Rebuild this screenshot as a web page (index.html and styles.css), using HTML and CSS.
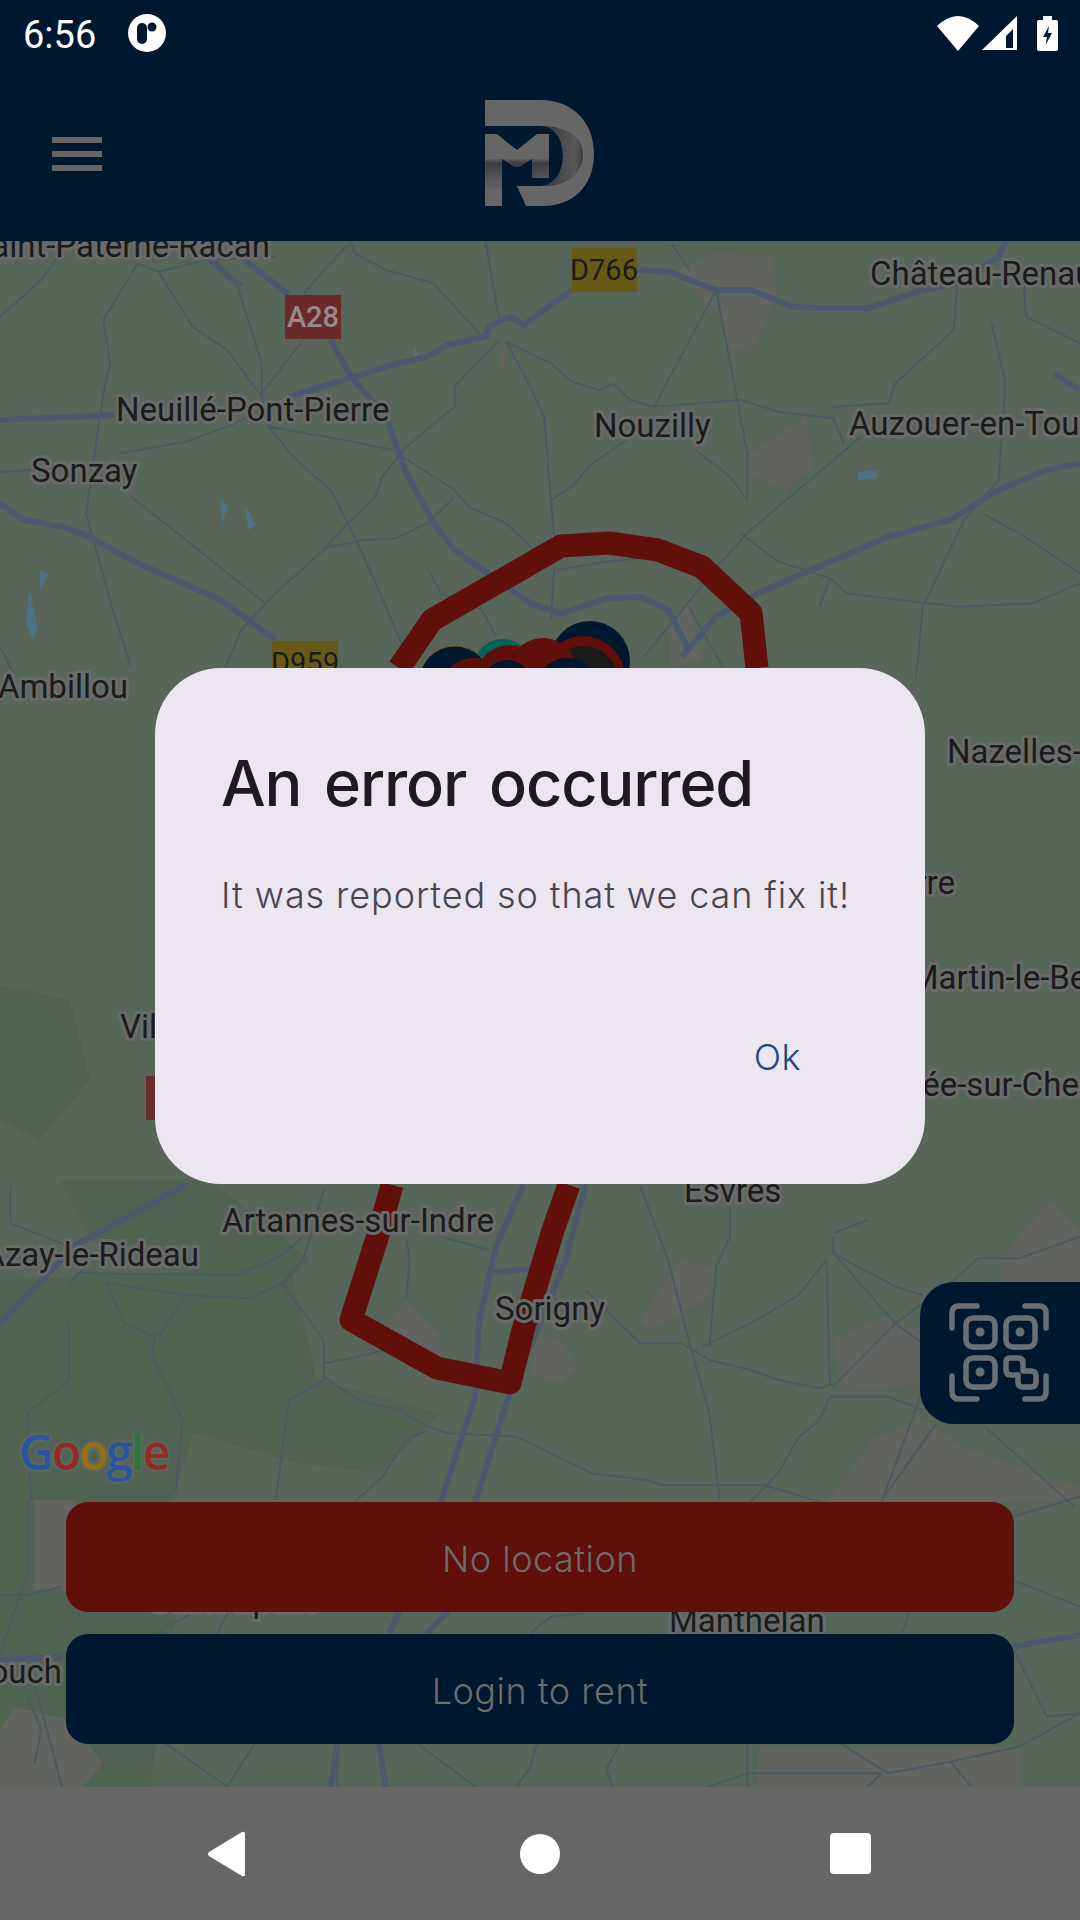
FILE: index.html
```html
<!DOCTYPE html>
<html lang="en">
<head>
<meta charset="utf-8">
<title>An error occurred</title>
<link rel="stylesheet" href="styles.css">
</head>
<body>
<div class="screen">
  <header class="appbar">
    <div class="statusbar">
      <div class="status-left">
        <span class="clock">6:56</span>
        <svg class="app-dot" viewBox="0 0 38 38"><circle cx="19" cy="19" r="19" fill="#fff"/><rect x="9" y="9" width="10" height="21" rx="5" fill="#001730"/><circle cx="24" cy="13" r="4.5" fill="#001730"/></svg>
      </div>
      <div class="status-right">
        <svg class="st-wifi" viewBox="0 0 42 35"><path d="M0 10Q21-10 42 10L21 35Z" fill="#fff"/></svg>
        <svg class="st-signal" viewBox="0 0 35 35"><path d="M0 34L35 0V34ZM24 32H31V13L24 20Z" fill="#fff" fill-rule="evenodd"/></svg>
        <svg class="st-batt" viewBox="0 0 21 35"><path d="M6 0H15V4H19Q21 4 21 6V33Q21 35 19 35H2Q0 35 0 33V6Q0 4 2 4H6Z" fill="#fff"/><path d="M12 10L6 21H10L8.5 29L15 17H11Z" fill="#001730"/></svg>
      </div>
    </div>
    <div class="toolbar">
      <div class="burger"><i></i><i></i><i></i></div>
      <svg class="logo" viewBox="485 101 110 107">
        <defs>
          <linearGradient id="mShade" x1="0" y1="0" x2="0" y2="1"><stop offset="0" stop-color="#666"/><stop offset=".34" stop-color="#666"/><stop offset=".40" stop-color="#3a3e43"/><stop offset=".78" stop-color="#666"/><stop offset="1" stop-color="#666"/></linearGradient>
          <linearGradient id="dShade" x1="0" y1="0" x2="1" y2="0"><stop offset="0" stop-color="#2a2e33"/><stop offset=".8" stop-color="#5a5a5a"/><stop offset="1" stop-color="#3a3d41"/></linearGradient>
        </defs>
        <path d="M485 101H540C574 101 594 124 594 155C594 186 574 207 543 207H526L517 187H540C555 187 563 172 563 157C563 140 555 127 540 127H485Z" fill="#666"/>
        <path d="M540 127C555 127 563 140 563 157C563 172 555 187 540 187H548C570 186 583 172 583 155C583 140 570 127 540 127Z" fill="url(#dShade)"/>
        <path d="M485 135H497L517 151L537 135H549V179H532V160L521 167Q517 169 513 167L502 160V207H485Z" fill="url(#mShade)"/>
      </svg>
    </div>
  </header>

  <main class="stage">
    <svg class="map" viewBox="0 241 1080 1546" preserveAspectRatio="none">
      <rect x="0" y="241" width="1080" height="1546" fill="#586659"/>

      <g fill="#506353">
        <path d="M0 1280L290 1267L317 1380L441 1413L379 1473L296 1463L193 1433L172 1502H172L120 1560L180 1590L150 1790H0Z"/>
        <path d="M60 1180H210L310 1260L280 1290L150 1260L90 1240Z"/>
        <path d="M0 985L70 1000L90 1080L40 1140L0 1120Z"/>
      </g>
      <g fill="#62645f">
        <path d="M675 273L716 253L771 257L778 290L751 353L723 347L723 317Z"/>
        <path d="M751 453L806 417L813 467L785 490L751 473Z"/>
        <path d="M495 345L505 345L506 380Z"/>
        <path d="M670 620L690 600L702 660L670 668Z"/>
        <path d="M406 1300L441 1337L441 1363L386 1353L379 1343Z"/>
        <path d="M680 1260L716 1267L709 1297L650 1330L640 1320Z"/>
        <path d="M834 1340L888 1313L923 1337L923 1383L841 1393Z"/>
        <path d="M875 1437L923 1420L964 1447L1033 1473L1080 1487V1502H827Z"/>
        <path d="M34 1500H76V1590H34Z"/>
        <path d="M14 1707L69 1720L103 1763L83 1787H0V1730Z"/>
        <path d="M758 1747H1019V1787H758Z"/>
        <path d="M535 1330L560 1340L578 1365L560 1383L530 1375Z"/>
        <path d="M1000 1260L1050 1200L1080 1230V1290H1000Z"/>
      </g>

      <g fill="#4f7282">
        <path d="M858 472L878 470L878 478L858 480Z"/>
        <path d="M30 590L38 630L32 640L26 620Z"/>
        <path d="M220 500L228 505L222 525Z"/>
        <path d="M414 345L418 355L414 358Z"/>
        <path d="M245 505L256 525L248 530Z"/>
        <path d="M40 570L48 575L40 590Z"/>
      </g>

      <g class="thin" transform="translate(0,240) scale(.6887,.3333)">
        <path d="M510 5L515 40L560 90L630 130L660 200L700 290"/>
        <path d="M510 5L470 90L440 165"/>
        <path d="M230 95L280 260L330 330L380 470"/>
        <path d="M200 70L230 95L300 60L400 50"/>
        <path d="M100 5L60 120L0 230"/>
        <path d="M200 70L150 240L160 370L150 460L125 820L165 1120L190 1280"/>
        <path d="M705 5L725 240"/>
        <path d="M345 140L380 370L380 470L390 560L430 660L480 750L510 870L550 1050L585 1220"/>
        <path d="M440 300L380 460"/>
        <path d="M725 300L660 440L660 500L590 620L555 710L545 770L500 860L470 930L400 1060L350 1170L320 1320"/>
        <path d="M735 305L770 440L790 530L800 780L805 900"/>
        <path d="M890 430L870 450L830 425L800 370L735 305"/>
        <path d="M890 430L915 480L950 500L1040 150"/>
        <path d="M1040 150L1085 640L1085 780"/>
        <path d="M975 10L1000 90"/>
        <path d="M950 500L1075 480L1130 515L1210 535L1225 610"/>
        <path d="M1290 490L1210 500"/>
        <path d="M1390 130L1385 270L1300 430L1290 490"/>
        <path d="M1250 590L1085 880L1050 960L935 1250"/>
        <path d="M1485 100L1490 230L1568 310"/>
        <path d="M1440 250L1460 430L1450 720L1400 840L1340 1100L1330 1320"/>
        <path d="M1430 825L1480 880L1568 1000"/>
        <path d="M1075 880L1130 965L1205 1015L1230 1060L1330 1085L1390 1100L1500 1090L1568 1030"/>
        <path d="M1205 1015L1190 1100"/>
        <path d="M910 600L860 670L830 740L800 780"/>
        <path d="M1010 630L1060 710L1085 780"/>
        <path d="M660 750L680 800L735 850L775 930"/>
        <path d="M660 770L620 850L575 895L530 900L470 925"/>
        <path d="M175 640L270 605L330 560L385 510"/>
        <path d="M390 560L500 600L570 630L660 750"/>
        <path d="M0 695L45 690"/>
        <path d="M190 770L270 900L385 1090"/>
        <path d="M620 980L640 1060L700 1110L720 1190"/>
        <path d="M805 980L800 1140"/>
        <path d="M810 990L880 965L950 950"/>
        <path d="M0 1220L20 1300"/>
        <path d="M1000 1100L1060 1320"/>
      </g>

      <g class="thin" transform="translate(0,1180) scale(.6887,.3333)">
        <path d="M15 15L15 130L90 190L130 250L100 310"/>
        <path d="M155 310L180 430L225 470L220 520L265 720L255 940"/>
        <path d="M270 345L230 470"/>
        <path d="M100 430L100 600L40 700L45 960"/>
        <path d="M155 310L270 345L360 355L410 310L440 240L470 30"/>
        <path d="M110 280L345 285L410 225L440 170"/>
        <path d="M410 310L470 480L470 600L420 660L400 960"/>
        <path d="M470 550L520 530L560 510L640 540"/>
        <path d="M470 590L520 660L580 690L620 740L650 760L750 770L860 880L940 900L960 915L1110 915L1190 965"/>
        <path d="M620 750L590 780L555 890L515 965"/>
        <path d="M590 180L595 240L590 350"/>
        <path d="M850 330L930 490L990 490L1030 540L1090 570L1130 600L1190 625L1210 610"/>
        <path d="M1210 170L1210 220L1300 430L1360 520L1280 965"/>
        <path d="M930 20L970 240L1000 480L1030 700L1045 960"/>
        <path d="M1210 220L1300 320L1340 345"/>
        <path d="M1060 80L1060 170L1040 260L1030 500"/>
        <path d="M1020 500L1090 430L1160 345L1200 240L1205 610"/>
        <path d="M1205 650L1290 650L1340 690"/>
        <path d="M1205 650L1190 720L1160 770L1130 880L1090 965"/>
        <path d="M1420 235L1480 235L1568 170"/>
        <path d="M1420 235L1380 310L1300 430L1210 620"/>
        <path d="M1360 730L1280 960"/>
        <path d="M1430 740L1560 980"/>
        <path d="M640 170L710 210"/>
        <path d="M1210 160L1260 120"/>
      </g>

      <g class="thin" transform="translate(0,1480) scale(.6887,.3333)">
        <path d="M40 60L40 280L0 520"/>
        <path d="M0 345L40 345L90 320"/>
        <path d="M40 530L90 920"/>
        <path d="M280 400L240 440L230 470"/>
        <path d="M330 400L290 570"/>
        <path d="M370 790L330 920L240 790"/>
        <path d="M490 790L490 920"/>
        <path d="M605 790L690 920"/>
        <path d="M780 790L770 860L750 920"/>
        <path d="M900 790L880 870L890 920"/>
        <path d="M1085 790L1085 920"/>
        <path d="M1220 790L1290 880L1380 845L1410 920"/>
        <path d="M1085 880L1280 880L1260 920"/>
        <path d="M1085 880L1030 920"/>
        <path d="M1380 845L1480 800L1568 700"/>
        <path d="M1470 300L1568 380"/>
        <path d="M1470 110L1568 50"/>
        <path d="M1470 500L1520 710L1568 700"/>
        <path d="M850 400L800 410L770 460"/>
        <path d="M1320 400L1310 460"/>
        <path d="M40 650L60 750L50 850"/>
      </g>

      <g class="major" transform="translate(0,240) scale(.6887,.3333)">
        <path d="M305 60L350 140"/>
        <path d="M355 60L420 165M480 300L510 410L560 530L590 700L630 850L660 930L770 1090L815 1120L880 1075L930 1070L970 1110L1000 1230"/>
        <path d="M0 540L165 525M420 470L500 420L570 375L620 350L650 315L705 290L710 260L740 230L760 255L830 150M925 90L970 95L1040 150L1090 150L1150 200L1200 205L1260 205L1340 150L1390 130L1450 50L1460 5"/>
        <path d="M1568 670L1520 690L1450 750L1380 840L1290 890L1200 970L1100 1060L1040 1130L990 1250"/>
        <path d="M0 790L35 840L90 860L130 890L190 960L320 1080L400 1200"/>
        <path d="M1568 450L1530 400"/>
      </g>
      <g class="major" transform="translate(0,1180) scale(.6887,.3333)">
        <path d="M270 15L110 195L0 430"/>
        <path d="M760 15L720 200L695 430L690 650L640 965"/>
        <path d="M850 15L820 250L780 450L740 640L690 965"/>
        <path d="M710 280L750 270L810 260"/>
      </g>
      <g class="major" transform="translate(0,1480) scale(.6887,.3333)">
        <path d="M640 66L580 395L565 460"/>
        <path d="M695 66L650 395L620 460"/>
        <path d="M490 790L480 920"/>
        <path d="M550 790L560 920"/>
        <path d="M0 540L90 530"/>
        <path d="M1470 500L1568 465"/>
      </g>

      <path class="geofence" d="M399 668L432 620L561 546L609 543L658 550L702 567L751 613L757 668"/>
      <path class="geofence" d="M392 1185L378 1235L351 1320L437 1368L510 1383L523 1330L553 1230L569 1185"/>

      <circle cx="590" cy="661" r="40" fill="#001730"/>
      <circle cx="503" cy="669" r="30" fill="#006357"/>
      <circle cx="455" cy="682" r="36" fill="#001730" stroke="#6d5a16"/>
      <circle cx="583" cy="678" r="42" fill="#600f0a"/>
      <circle cx="583" cy="681" r="35" fill="#1a1a1a"/>
      <circle cx="543" cy="672" r="34" fill="#600f0a"/>
      <circle cx="510" cy="680" r="35" fill="#600f0a"/>
      <circle cx="473" cy="690" r="32" fill="#600f0a"/>
      <circle cx="507" cy="685" r="25" fill="#001730"/>
      <circle cx="567" cy="690" r="32" fill="#001730"/>
      <circle cx="570" cy="700" r="33" fill="#600f0a"/>

      <g class="shield">
        <rect x="572" y="248" width="65" height="44" fill="#685a16"/>
        <text x="604" y="280" class="sh-dark">D766</text>
        <rect x="285" y="295" width="56" height="44" fill="#6b2a2a"/>
        <text x="313" y="327" class="sh-light">A28</text>
        <rect x="272" y="641" width="66" height="44" fill="#685a16"/>
        <text x="305" y="673" class="sh-dark">D959</text>
        <rect x="146" y="1076" width="60" height="44" fill="#6b2a2a"/>
      </g>

      <g class="labels">
        <text x="270" y="257" text-anchor="end">Saint-Paterne-Racan</text>
        <text x="870" y="285">Château-Renault</text>
        <text x="116" y="421">Neuillé-Pont-Pierre</text>
        <text x="594" y="437">Nouzilly</text>
        <text x="849" y="435">Auzouer-en-Touraine</text>
        <text x="31" y="482">Sonzay</text>
        <text x="128" y="698" text-anchor="end">Ambillou</text>
        <text x="947" y="763">Nazelles-Négron</text>
        <text x="955" y="894" text-anchor="end">Dierre</text>
        <text x="826" y="989">Saint-Martin-le-Beau</text>
        <text x="120" y="1038">Villandry</text>
        <text x="872" y="1096">Athée-sur-Cher</text>
        <text x="684" y="1202">Esvres</text>
        <text x="222" y="1232">Artannes-sur-Indre</text>
        <text x="199" y="1266" text-anchor="end">Azay-le-Rideau</text>
        <text x="495" y="1320">Sorigny</text>
        <text x="150" y="1612">Saint-Épain</text>
        <text x="669" y="1632">Manthelan</text>
        <text x="62" y="1683" text-anchor="end">Crouch</text>
      </g>

      <text class="google" x="19" y="1470"><tspan fill="#2a55a0">G</tspan><tspan fill="#952a22">o</tspan><tspan fill="#967010">o</tspan><tspan fill="#2a55a0">g</tspan><tspan fill="#2a7539">l</tspan><tspan fill="#952a22">e</tspan></text>
    </svg>

    <button class="qr-btn" type="button" aria-label="Scan QR code">
      <svg class="qr-icon" viewBox="948 1303 102 102">
        <g fill="none" stroke="#6a6f76" stroke-width="5.5" stroke-linecap="round">
          <path d="M952 1329V1314Q952 1307 959 1307H977"/>
          <path d="M1025 1307H1039Q1046 1307 1046 1314V1329"/>
          <path d="M952 1377V1393Q952 1400 959 1400H977"/>
          <path d="M1025 1400H1039Q1046 1400 1046 1393V1377"/>
          <rect x="966" y="1319" width="29" height="29" rx="7"/>
          <rect x="1006" y="1319" width="29" height="29" rx="7"/>
          <rect x="966" y="1359" width="29" height="29" rx="7"/>
          <path d="M1006 1363Q1006 1359 1010 1359H1018Q1023 1359 1023 1364V1372H1031Q1036 1372 1036 1377V1383Q1036 1388 1031 1388H1023Q1018 1388 1018 1383V1376H1011Q1006 1376 1006 1371Z" stroke-linejoin="round"/>
        </g>
        <g fill="#6a6f76">
          <circle cx="980" cy="1333" r="4.5"/>
          <circle cx="1020" cy="1333" r="4.5"/>
          <circle cx="980" cy="1373" r="4.5"/>
        </g>
      </svg>
    </button>

    <div class="actions">
      <button class="action action-red" type="button">No location</button>
      <button class="action action-navy" type="button">Login to rent</button>
    </div>
  </main>

  <nav class="navbar">
    <svg class="nav-back" viewBox="0 0 38 46"><path d="M35 1Q38 0 38 3V43Q38 46 35 45L2 25Q0 23 2 21Z" fill="#fff"/></svg>
    <span class="nav-home"></span>
    <span class="nav-recent"></span>
  </nav>

  <section class="dialog" role="alertdialog">
    <h1 class="dialog-title">An error occurred</h1>
    <p class="dialog-body">It was reported so that we can fix it!</p>
    <div class="dialog-actions"><button class="dialog-ok" type="button">Ok</button></div>
  </section>
</div>
</body>
</html>
```
FILE: styles.css
```css
* { box-sizing: border-box; }
html, body { margin: 0; padding: 0; }
body { background: #001730; font-family: Roboto, "Noto Sans", sans-serif; }

.screen { position: relative; width: 1080px; height: 1920px; display: flex; flex-direction: column; overflow: hidden; }

.appbar { height: 241px; background: #001730; display: flex; flex-direction: column; flex: none; }
.statusbar { height: 66px; display: flex; justify-content: space-between; align-items: center; padding: 0 22px 0 23px; }
.status-left { display: flex; align-items: center; gap: 32px; }
.clock { color: #fff; font-size: 38px; line-height: 66px; padding-top: 3px; }
.app-dot { width: 38px; height: 38px; display: block; }
.status-right { display: flex; align-items: center; gap: 3px; }
.st-wifi { width: 42px; height: 35px; display: block; }
.st-signal { width: 35px; height: 35px; display: block; margin-right: 17px; }
.st-batt { width: 21px; height: 35px; display: block; }

.toolbar { flex: 1; display: flex; align-items: center; padding-left: 52px; }
.burger { display: flex; flex-direction: column; gap: 8px; width: 50px; }
.burger i { display: block; height: 6px; background: #666; }
.logo { width: 110px; height: 107px; display: block; margin-left: 383px; }

.stage { position: relative; flex: 1; display: flex; flex-direction: column; justify-content: flex-end; overflow: hidden; }
.map { position: absolute; left: 0; top: 0; width: 1080px; height: 1546px; display: block; }

.thin path { fill: none; stroke: #4a5963; stroke-width: 2; vector-effect: non-scaling-stroke; stroke-linejoin: round; }
.major path { fill: none; stroke: #4c586b; stroke-width: 6; vector-effect: non-scaling-stroke; stroke-linejoin: round; }

.geofence { fill: none; stroke: #600f0a; stroke-width: 23; stroke-linejoin: round; }

.shield text { font-family: Roboto, sans-serif; font-size: 29px; text-anchor: middle; }
.sh-dark { fill: #1a1a1a; }
.sh-light { fill: #968a8a; font-weight: 500; }

.labels text { font-family: Roboto, sans-serif; font-size: 33px; fill: #1b1b1b; stroke: #686b69; stroke-width: 6px; paint-order: stroke; stroke-linejoin: round; }
.google { font-family: "Open Sans", sans-serif; font-size: 48px; font-weight: 600; letter-spacing: -2px; filter: drop-shadow(0 0 2px #6e736f); }

.qr-btn { position: absolute; right: 0; top: 1041px; width: 160px; height: 142px; border: 0; padding: 0; background: #001730; border-radius: 34px 0 0 34px; display: flex; align-items: center; justify-content: center; }
.qr-icon { width: 102px; height: 102px; display: block; margin-right: 2px; }

.actions { position: relative; display: flex; flex-direction: column; gap: 22px; padding: 0 66px 43px; }
.action { height: 110px; border: 0; border-radius: 22px; color: #6c6c6c; font-family: Inter, sans-serif; font-size: 36px; font-weight: 300; letter-spacing: .5px; padding: 4px 0 0; }
.action-red { background: #600f0a; }
.action-navy { background: #001730; }

.navbar { height: 133px; flex: none; background: #666; display: flex; align-items: center; padding-left: 207px; }
.nav-back { width: 38px; height: 46px; display: block; }
.nav-home { width: 40px; height: 40px; border-radius: 50%; background: #fff; margin-left: 275px; }
.nav-recent { width: 41px; height: 41px; border-radius: 4px; background: #fff; margin-left: 270px; }

.dialog { position: absolute; left: 155px; top: 668px; width: 770px; height: 516px; background: #ece6f0; border-radius: 66px; display: flex; flex-direction: column; padding: 0 66px; }
.dialog-title { margin: 0; padding-top: 76px; font-family: Inter, sans-serif; font-weight: 500; font-size: 63px; line-height: 78px; color: #1d1b20; letter-spacing: -1.1px; word-spacing: 7px; }
.dialog-body { margin: 0; padding-top: 47px; font-family: Inter, sans-serif; font-weight: 300; font-size: 36px; line-height: 52px; color: #49454f; letter-spacing: .9px; white-space: nowrap; }
.dialog-actions { margin-top: auto; display: flex; justify-content: flex-end; padding-bottom: 103px; }
.dialog-ok { border: 0; padding: 0; background: none; font-family: Inter, sans-serif; font-weight: 300; font-size: 36px; line-height: 48px; letter-spacing: .5px; color: #1c4a82; margin-right: 58px; }
```
